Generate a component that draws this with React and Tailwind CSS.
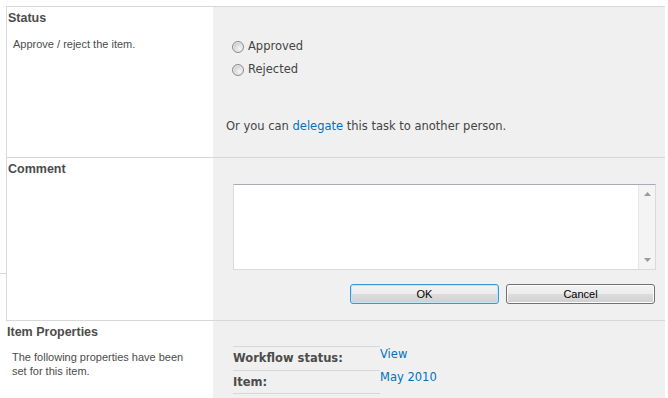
import React from "react";

const verdana = { fontFamily: '"DejaVu Sans", Verdana, sans-serif' };

const Radio = ({ label }) => (
  <label className="flex items-center gap-[4px] text-[11.5px] leading-[13px] text-[#444444]" style={verdana}>
    <span className="w-[12px] h-[12px] rounded-full border border-[#8a8a8a] bg-[radial-gradient(circle_at_65%_65%,#f6f6f6_0%,#dcdcdc_45%,#b9b9b9_100%)] shadow-[inset_0_0_0_1px_#eeeeee]" />
    {label}
  </label>
);

const Button = ({ children, focused }) => (
  <button
    className={
      focused
        ? "w-[149px] h-[20px] rounded-[3px] border border-[#3399dd] shadow-[inset_0_0_0_1px_#c4e5f6] bg-[linear-gradient(to_bottom,#f3f3f3_0%,#ececec_48%,#dcdcdc_52%,#d0d0d0_100%)] text-[11px] text-black font-['Liberation_Sans',Arial,sans-serif]"
        : "w-[149px] h-[20px] rounded-[3px] border border-[#707070] shadow-[inset_0_0_0_1px_#fcfcfc] bg-[linear-gradient(to_bottom,#f3f3f3_0%,#ececec_48%,#dcdcdc_52%,#d0d0d0_100%)] text-[11px] text-black font-['Liberation_Sans',Arial,sans-serif]"
    }
  >
    {children}
  </button>
);

const Label = ({ children }) => (
  <div className="pl-[1px] pt-[4px] text-[12.5px] leading-[14px] font-bold text-[#4c4c4c] font-['Liberation_Sans',Arial,sans-serif]">
    {children}
  </div>
);

const Desc = ({ children }) => (
  <div className="pl-[6px] pr-[20px] text-[11px] leading-[14px] text-[#4c4c4c] font-['Liberation_Sans',Arial,sans-serif]">
    {children}
  </div>
);

export default function App() {
  return (
    <div className="w-[668px] h-[398px] overflow-hidden bg-white flex">
      {/* outer gutter */}
      <div className="w-[6px] shrink-0">
        <div className="h-[274px] border-b border-[#d8d8d8]" />
      </div>

      <div className="w-[659px] mt-[6px] border-t border-[#d8d8d8] flex flex-col">
        {/* Status */}
        <div className="flex h-[151px] border-b border-[#d8d8d8]">
          <div className="w-[207px] border-l border-[#d8d8d8] bg-white">
            <Label>Status</Label>
            <div className="mt-[12px]">
              <Desc>Approve / reject the item.</Desc>
            </div>
          </div>
          <div className="flex-1 bg-[#f0f0f0] flex flex-col">
            <div className="pl-[19px] pt-[33px] flex flex-col gap-[10px]">
              <Radio label="Approved" />
              <Radio label="Rejected" />
            </div>
            <div className="pl-[13px] mt-[44px] text-[11.5px] leading-[13px] text-[#444444]" style={verdana}>
              Or you can <a className="text-[#0072bc]">delegate</a> this task to another person.
            </div>
          </div>
        </div>

        {/* Comment */}
        <div className="flex h-[163px] border-b border-[#d8d8d8]">
          <div className="w-[207px] border-l border-[#d8d8d8] bg-white">
            <Label>Comment</Label>
          </div>
          <div className="flex-1 bg-[#f0f0f0] pl-[20px] pr-[9px] pt-[26px]">
            <div className="h-[86px] flex bg-white border border-[#dadada] border-t-[#a8acb2]">
              <div className="flex-1" />
              <div className="w-[17px] bg-[#f4f4f4] border-l border-[#e6e6e6] flex flex-col items-center justify-between py-[7px]">
                <svg width="7" height="4" viewBox="0 0 7 4">
                  <path d="M0 4 L3.5 0 L7 4 Z" fill="#9a9a9a" />
                </svg>
                <svg width="7" height="4" viewBox="0 0 7 4">
                  <path d="M0 0 L3.5 4 L7 0 Z" fill="#9a9a9a" />
                </svg>
              </div>
            </div>
            <div className="flex justify-end gap-[7px] mt-[14px] pr-[1px]">
              <Button focused>OK</Button>
              <Button>Cancel</Button>
            </div>
          </div>
        </div>

        {/* Item Properties */}
        <div className="flex flex-1">
          <div className="w-[207px] bg-white">
            <Label>Item Properties</Label>
            <div className="mt-[11px]">
              <Desc>The following properties have been set for this item.</Desc>
            </div>
          </div>
          <div className="flex-1 bg-[#f0f0f0] pl-[20px] pt-[25px]">
            <div className="flex">
              <div className="w-[147px] border-t border-[#d8d8d8]">
                <div className="h-[24px] border-b border-[#d8d8d8] pt-[5px] text-[11.5px] leading-[13px] font-bold text-[#4c4c4c]" style={verdana}>
                  Workflow status:
                </div>
                <div className="h-[23px] border-b border-[#d8d8d8] pt-[5px] text-[11.5px] leading-[13px] font-bold text-[#4c4c4c]" style={verdana}>
                  Item:
                </div>
              </div>
              <div className="pt-[2px] text-[11.5px] leading-[13px] text-[#0072bc]" style={verdana}>
                <div className="h-[23px]">View</div>
                <div>May 2010</div>
              </div>
            </div>
          </div>
        </div>
      </div>
    </div>
  );
}
